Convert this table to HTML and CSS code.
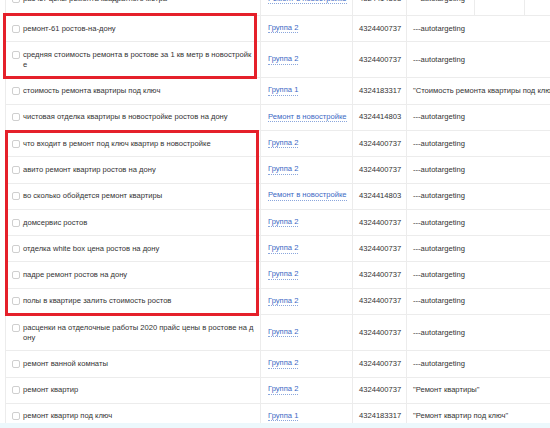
FILE: index.html
```html
<!DOCTYPE html>
<html lang="ru">
<head>
<meta charset="utf-8">
<link rel="stylesheet" href="styles.css">
</head>
<body>
<div class="table">
  <div class="row row-top">
    <div class="cell kw"><span class="cb"></span><span class="kw-text">расчет цены ремонта квадратного метра</span></div>
    <div class="cell grp"><a class="link">Ремонт в новостройке</a></div>
    <div class="cell id">4324414803</div>
    <div class="cell ph">---autotargeting</div>
    <div class="cell ph"></div>
    <div class="cell ph"></div>
  </div>
  <div class="row">
    <div class="cell kw"><span class="cb"></span><span class="kw-text">ремонт-61 ростов-на-дону</span></div>
    <div class="cell grp"><a class="link">Группа 2</a></div>
    <div class="cell id">4324400737</div>
    <div class="cell ph">---autotargeting</div>
  </div>
  <div class="row">
    <div class="cell kw"><span class="cb"></span><span class="kw-text">средняя стоимость ремонта в ростове за 1 кв метр в новостройке</span></div>
    <div class="cell grp"><a class="link">Группа 2</a></div>
    <div class="cell id">4324400737</div>
    <div class="cell ph">---autotargeting</div>
  </div>
  <div class="row">
    <div class="cell kw"><span class="cb"></span><span class="kw-text">стоимость ремонта квартиры под ключ</span></div>
    <div class="cell grp"><a class="link">Группа 1</a></div>
    <div class="cell id">4324183317</div>
    <div class="cell ph">"Стоимость ремонта квартиры под ключ"</div>
  </div>
  <div class="row">
    <div class="cell kw"><span class="cb"></span><span class="kw-text">чистовая отделка квартиры в новостройке ростов на дону</span></div>
    <div class="cell grp"><a class="link">Ремонт в новостройке</a></div>
    <div class="cell id">4324414803</div>
    <div class="cell ph">---autotargeting</div>
  </div>
  <div class="row">
    <div class="cell kw"><span class="cb"></span><span class="kw-text">что входит в ремонт под ключ квартир в новостройке</span></div>
    <div class="cell grp"><a class="link">Группа 2</a></div>
    <div class="cell id">4324400737</div>
    <div class="cell ph">---autotargeting</div>
  </div>
  <div class="row">
    <div class="cell kw"><span class="cb"></span><span class="kw-text">авито ремонт квартир ростов на дону</span></div>
    <div class="cell grp"><a class="link">Группа 2</a></div>
    <div class="cell id">4324400737</div>
    <div class="cell ph">---autotargeting</div>
  </div>
  <div class="row">
    <div class="cell kw"><span class="cb"></span><span class="kw-text">во сколько обойдется ремонт квартиры</span></div>
    <div class="cell grp"><a class="link">Ремонт в новостройке</a></div>
    <div class="cell id">4324414803</div>
    <div class="cell ph">---autotargeting</div>
  </div>
  <div class="row">
    <div class="cell kw"><span class="cb"></span><span class="kw-text">домсервис ростов</span></div>
    <div class="cell grp"><a class="link">Группа 2</a></div>
    <div class="cell id">4324400737</div>
    <div class="cell ph">---autotargeting</div>
  </div>
  <div class="row">
    <div class="cell kw"><span class="cb"></span><span class="kw-text">отделка white box цена ростов на дону</span></div>
    <div class="cell grp"><a class="link">Группа 2</a></div>
    <div class="cell id">4324400737</div>
    <div class="cell ph">---autotargeting</div>
  </div>
  <div class="row">
    <div class="cell kw"><span class="cb"></span><span class="kw-text">падре ремонт ростов на дону</span></div>
    <div class="cell grp"><a class="link">Группа 2</a></div>
    <div class="cell id">4324400737</div>
    <div class="cell ph">---autotargeting</div>
  </div>
  <div class="row">
    <div class="cell kw"><span class="cb"></span><span class="kw-text">полы в квартире залить стоимость ростов</span></div>
    <div class="cell grp"><a class="link">Группа 2</a></div>
    <div class="cell id">4324400737</div>
    <div class="cell ph">---autotargeting</div>
  </div>
  <div class="row">
    <div class="cell kw"><span class="cb"></span><span class="kw-text">расценки на отделочные работы 2020 прайс цены в ростове на дону</span></div>
    <div class="cell grp"><a class="link">Группа 2</a></div>
    <div class="cell id">4324400737</div>
    <div class="cell ph">---autotargeting</div>
  </div>
  <div class="row">
    <div class="cell kw"><span class="cb"></span><span class="kw-text">ремонт ванной комнаты</span></div>
    <div class="cell grp"><a class="link">Группа 2</a></div>
    <div class="cell id">4324400737</div>
    <div class="cell ph">---autotargeting</div>
  </div>
  <div class="row">
    <div class="cell kw"><span class="cb"></span><span class="kw-text">ремонт квартир</span></div>
    <div class="cell grp"><a class="link">Группа 2</a></div>
    <div class="cell id">4324400737</div>
    <div class="cell ph">"Ремонт квартиры"</div>
  </div>
  <div class="row">
    <div class="cell kw"><span class="cb"></span><span class="kw-text">ремонт квартир под ключ</span></div>
    <div class="cell grp"><a class="link">Группа 1</a></div>
    <div class="cell id">4324183317</div>
    <div class="cell ph">"Ремонт квартир под ключ"</div>
  </div>
</div>
<div class="mark mark-1"></div>
<div class="mark mark-2"></div>
<div class="footer-strip"></div>
</body>
</html>
```

FILE: styles.css
```css
html, body {
  margin: 0;
  padding: 0;
}
body {
  width: 550px;
  height: 428px;
  overflow: hidden;
  position: relative;
  background: #fff;
  font-family: "Liberation Sans", Arial, sans-serif;
  font-size: 7.6px;
  color: #333;
}
.table {
  margin: -10.4px 0 0 5px;
  width: 700px;
  border-left: 1px solid #ececec;
}
.row {
  display: grid;
  grid-template-columns: 255px 92px 54px 1fr;
  border-bottom: 1px solid #ececec;
}
.row-top {
  grid-template-columns: 255px 92px 54px 68px 50px 1fr;
}
.cell {
  display: flex;
  align-items: center;
  padding: 7.65px 6px;
  line-height: 10px;
  border-right: 1px solid #ececec;
  white-space: nowrap;
}
.row-top .cell {
  padding-top: 4.65px;
  padding-bottom: 10.65px;
}
.cell.ph {
  border-right: none;
}
.row-top .cell.ph {
  border-right: 1px solid #ececec;
}
.cell.kw {
  align-items: flex-start;
  padding-left: 6px;
  padding-right: 6px;
  white-space: normal;
}
.cell.grp {
  padding-left: 7px;
}
.cb {
  flex: none;
  box-sizing: border-box;
  width: 8px;
  height: 8px;
  margin: 1px 3px 0 0;
  border: 1px solid #cfcfcf;
  border-radius: 2px;
  background: #fff;
}
.kw-text {
  word-break: break-all;
  color: #333;
}
.link {
  color: #3c68c4;
  text-decoration: none;
  border-bottom: 1px dotted #8aa6dc;
  line-height: 8.5px;
}
.mark {
  position: absolute;
  border: 3px solid #e5202a;
  box-sizing: border-box;
}
.mark-1 {
  left: 3px;
  top: 13px;
  width: 254px;
  height: 66px;
}
.mark-2 {
  left: 5px;
  top: 130px;
  width: 254px;
  height: 186px;
}
.footer-strip {
  position: absolute;
  left: 0;
  right: 0;
  bottom: 0;
  height: 5px;
  background: #ecf8fc;
}
```
